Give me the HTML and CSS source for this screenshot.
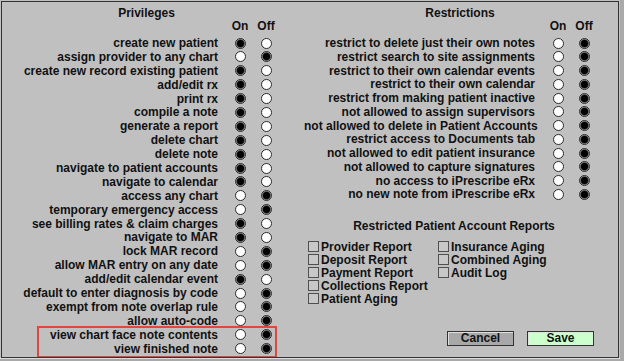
FILE: index.html
```html
<!DOCTYPE html>
<html lang="en">
<head>
    <meta charset="UTF-8">
    <meta name="viewport" content="width=device-width, initial-scale=1.0">
    <title>User Permissions</title>
    <link rel="stylesheet" href="styles.css">
</head>
<body>
    <div class="frame">
        <section class="panel privileges">
            <h2>Privileges</h2>
            <div class="row head"><span></span><span>On</span><span>Off</span></div>
            <div class="list">
                <div class="row"><label>create new patient</label><input type="radio" class="radio" name="p1" checked><input type="radio" class="radio" name="p1"></div>
                <div class="row"><label>assign provider to any chart</label><input type="radio" class="radio" name="p2"><input type="radio" class="radio" name="p2" checked></div>
                <div class="row"><label>create new record existing patient</label><input type="radio" class="radio" name="p3" checked><input type="radio" class="radio" name="p3"></div>
                <div class="row"><label>add/edit rx</label><input type="radio" class="radio" name="p4" checked><input type="radio" class="radio" name="p4"></div>
                <div class="row"><label>print rx</label><input type="radio" class="radio" name="p5" checked><input type="radio" class="radio" name="p5"></div>
                <div class="row"><label>compile a note</label><input type="radio" class="radio" name="p6" checked><input type="radio" class="radio" name="p6"></div>
                <div class="row"><label>generate a report</label><input type="radio" class="radio" name="p7" checked><input type="radio" class="radio" name="p7"></div>
                <div class="row"><label>delete chart</label><input type="radio" class="radio" name="p8" checked><input type="radio" class="radio" name="p8"></div>
                <div class="row"><label>delete note</label><input type="radio" class="radio" name="p9" checked><input type="radio" class="radio" name="p9"></div>
                <div class="row"><label>navigate to patient accounts</label><input type="radio" class="radio" name="p10" checked><input type="radio" class="radio" name="p10"></div>
                <div class="row"><label>navigate to calendar</label><input type="radio" class="radio" name="p11" checked><input type="radio" class="radio" name="p11"></div>
                <div class="row"><label>access any chart</label><input type="radio" class="radio" name="p12"><input type="radio" class="radio" name="p12" checked></div>
                <div class="row"><label>temporary emergency access</label><input type="radio" class="radio" name="p13"><input type="radio" class="radio" name="p13" checked></div>
                <div class="row"><label>see billing rates &amp; claim charges</label><input type="radio" class="radio" name="p14" checked><input type="radio" class="radio" name="p14"></div>
                <div class="row"><label>navigate to MAR</label><input type="radio" class="radio" name="p15" checked><input type="radio" class="radio" name="p15"></div>
                <div class="row"><label>lock MAR record</label><input type="radio" class="radio" name="p16"><input type="radio" class="radio" name="p16" checked></div>
                <div class="row"><label>allow MAR entry on any date</label><input type="radio" class="radio" name="p17"><input type="radio" class="radio" name="p17" checked></div>
                <div class="row"><label>add/edit calendar event</label><input type="radio" class="radio" name="p18" checked><input type="radio" class="radio" name="p18"></div>
                <div class="row"><label>default to enter diagnosis by code</label><input type="radio" class="radio" name="p19"><input type="radio" class="radio" name="p19" checked></div>
                <div class="row"><label>exempt from note overlap rule</label><input type="radio" class="radio" name="p20"><input type="radio" class="radio" name="p20" checked></div>
                <div class="row"><label>allow auto-code</label><input type="radio" class="radio" name="p21"><input type="radio" class="radio" name="p21" checked></div>
                <div class="highlight">
                    <div class="row"><label>view chart face note contents</label><input type="radio" class="radio" name="p22"><input type="radio" class="radio" name="p22" checked></div>
                    <div class="row"><label>view finished note</label><input type="radio" class="radio" name="p23"><input type="radio" class="radio" name="p23" checked></div>
                </div>
            </div>
        </section>

        <section class="panel restrictions">
            <h2>Restrictions</h2>
            <div class="row head"><span></span><span>On</span><span>Off</span></div>
            <div class="list">
                <div class="row"><label>restrict to delete just their own notes</label><input type="radio" class="radio" name="r1"><input type="radio" class="radio" name="r1" checked></div>
                <div class="row"><label>restrict search to site assignments</label><input type="radio" class="radio" name="r2"><input type="radio" class="radio" name="r2" checked></div>
                <div class="row"><label>restrict to their own calendar events</label><input type="radio" class="radio" name="r3"><input type="radio" class="radio" name="r3" checked></div>
                <div class="row"><label>restrict to their own calendar</label><input type="radio" class="radio" name="r4"><input type="radio" class="radio" name="r4" checked></div>
                <div class="row"><label>restrict from making patient inactive</label><input type="radio" class="radio" name="r5"><input type="radio" class="radio" name="r5" checked></div>
                <div class="row"><label>not allowed to assign supervisors</label><input type="radio" class="radio" name="r6"><input type="radio" class="radio" name="r6" checked></div>
                <div class="row"><label>not allowed to delete in Patient Accounts</label><input type="radio" class="radio" name="r7"><input type="radio" class="radio" name="r7" checked></div>
                <div class="row"><label>restrict access to Documents tab</label><input type="radio" class="radio" name="r8"><input type="radio" class="radio" name="r8" checked></div>
                <div class="row"><label>not allowed to edit patient insurance</label><input type="radio" class="radio" name="r9"><input type="radio" class="radio" name="r9" checked></div>
                <div class="row"><label>not allowed to capture signatures</label><input type="radio" class="radio" name="r10"><input type="radio" class="radio" name="r10" checked></div>
                <div class="row"><label>no access to iPrescribe eRx</label><input type="radio" class="radio" name="r11"><input type="radio" class="radio" name="r11" checked></div>
                <div class="row"><label>no new note from iPrescribe eRx</label><input type="radio" class="radio" name="r12"><input type="radio" class="radio" name="r12" checked></div>
            </div>

            <div class="reports">
                <h3>Restricted Patient Account Reports</h3>
                <div class="report-grid">
                    <div class="report-col">
                        <label class="check"><input type="checkbox">Provider Report</label>
                        <label class="check"><input type="checkbox">Deposit Report</label>
                        <label class="check"><input type="checkbox">Payment Report</label>
                        <label class="check"><input type="checkbox">Collections Report</label>
                        <label class="check"><input type="checkbox">Patient Aging</label>
                    </div>
                    <div class="report-col">
                        <label class="check"><input type="checkbox">Insurance Aging</label>
                        <label class="check"><input type="checkbox">Combined Aging</label>
                        <label class="check"><input type="checkbox">Audit Log</label>
                    </div>
                </div>
            </div>

            <div class="actions">
                <button class="btn cancel-btn">Cancel</button>
                <button class="btn save-btn">Save</button>
            </div>
        </section>
    </div>
</body>
</html>
```

FILE: styles.css
```css
body {
    margin: 0;
    padding: 0;
    background-color: #a9a9a9;
    font-family: "Liberation Sans", Arial, sans-serif;
    font-weight: bold;
    font-size: 12px;
    color: #111;
}
.frame {
    display: flex;
    width: 620px;
    height: 359px;
    box-sizing: border-box;
    background-color: #c0c0c0;
    border: 1px solid #c0c0c0;
    border-right: none;
    border-bottom: 2px solid #dcdcdc;
    outline: 1px solid #333;
    outline-offset: -2px;
    overflow: hidden;
}
.panel {
    padding-top: 5px;
}
.privileges {
    width: 301px;
    padding-left: 2px;
}
.restrictions {
    width: 316px;
}
h2, h3 {
    margin: 0;
    font-size: 12px;
    line-height: 14px;
    text-align: center;
}
.privileges h2 {
    width: 287px;
}
.restrictions h2 {
    width: 312px;
}
.row {
    display: grid;
    align-items: center;
    justify-items: center;
    line-height: 14px;
}
.privileges .row {
    grid-template-columns: 224px 26px 26px;
    height: 13.9px;
}
.restrictions .row {
    grid-template-columns: 241px 26px 26px;
    height: 13.75px;
}
.row label {
    justify-self: stretch;
    text-align: right;
    white-space: nowrap;
}
.privileges .row label {
    padding-right: 9px;
}
.restrictions .row label {
    padding-right: 10px;
}
.row.head {
    height: 12px;
    margin-top: -1px;
}
.list {
    margin-top: 5px;
}
.radio {
    appearance: none;
    margin: 0;
    width: 11px;
    height: 11px;
    border: 1px solid #2a2a2a;
    border-radius: 50%;
    background-color: #fff;
    box-sizing: border-box;
}
.radio:checked {
    background: radial-gradient(circle, #000 0 3px, #2a2a2a 3.6px, #a8a8a8 4.5px);
}
.highlight {
    position: relative;
}
.highlight::after {
    content: '';
    position: absolute;
    left: 34px;
    width: 240px;
    top: -2px;
    bottom: -3px;
    border: 2px solid #e5453f;
    box-sizing: border-box;
    pointer-events: none;
}
.reports {
    margin-top: 18px;
}
.reports h3 {
    width: 300px;
}
.report-grid {
    display: flex;
    margin-top: 7px;
    padding-left: 4px;
}
.report-col {
    display: flex;
    flex-direction: column;
}
.report-col:first-child {
    width: 130px;
}
.check {
    display: flex;
    align-items: center;
    height: 13.1px;
    white-space: nowrap;
}
.check input {
    appearance: none;
    margin: 0 2px 0 0;
    width: 11px;
    height: 11px;
    border: 1px solid #505050;
    background-color: #c8c8c8;
    box-sizing: border-box;
}
.actions {
    display: flex;
    justify-content: flex-end;
    gap: 13px;
    margin-top: 26px;
    padding-right: 26px;
}
.btn {
    width: 67px;
    height: 15px;
    padding: 0;
    font-family: "Liberation Sans", Arial, sans-serif;
    font-weight: bold;
    font-size: 12px;
    line-height: 13px;
    color: #111;
    border: 1px solid #333;
    box-shadow: inset 1px 1px 0 #e0e0e0;
    cursor: pointer;
}
.cancel-btn {
    background-color: #a8a8a8;
}
.save-btn {
    background-color: #ccffcc;
}
```
